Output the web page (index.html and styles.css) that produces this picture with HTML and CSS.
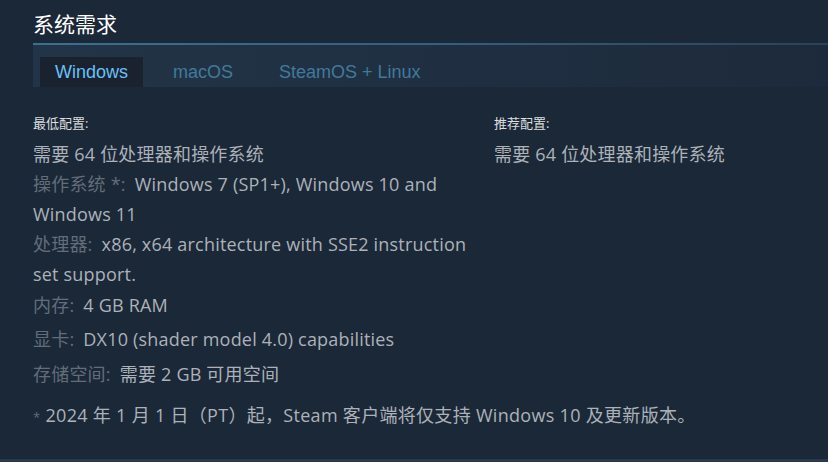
FILE: index.html
```html
<!DOCTYPE html>
<html lang="zh-CN">
<head>
<meta charset="utf-8">
<link rel="stylesheet" href="styles.css">
</head>
<body>
<div class="page">
  <h2 class="title">系统需求</h2>
  <div class="tabs">
    <div class="tab active">Windows</div>
    <div class="tab">macOS</div>
    <div class="tab">SteamOS + Linux</div>
  </div>
  <div class="reqs">
    <div class="col col-min">
      <div class="heading">最低配置:</div>
      <ul class="list">
        <li class="row">需要 64 位处理器和操作系统</li>
        <li class="row"><span class="label">操作系统 *:</span>Windows 7 (SP1+), Windows 10 and Windows 11</li>
        <li class="row"><span class="label">处理器:</span>x86, x64 architecture with SSE2 instruction set support.</li>
        <li class="row mem"><span class="label">内存:</span>4 GB RAM</li>
        <li class="row gpu"><span class="label">显卡:</span>DX10 (shader model 4.0) capabilities</li>
        <li class="row disk"><span class="label">存储空间:</span>需要 2 GB 可用空间</li>
      </ul>
    </div>
    <div class="col col-rec">
      <div class="heading">推荐配置:</div>
      <ul class="list">
        <li class="row">需要 64 位处理器和操作系统</li>
      </ul>
    </div>
  </div>
  <div class="note"><span class="star">*</span> 2024 年 1 月 1 日（PT）起，Steam 客户端将仅支持 Windows 10 及更新版本。</div>
</div>
<div class="bottom"></div>
</body>
</html>
```
FILE: styles.css
```css
html, body {
  margin: 0;
  padding: 0;
  background: #1b2838;
  overflow: hidden;
}
body {
  font-family: "Open Sans", "Noto Sans CJK SC", sans-serif;
  display: flex;
  flex-direction: column;
  width: 828px;
  height: 462px;
}
.page {
  flex: 1;
  padding-left: 33px;
}
.title {
  margin: 0;
  padding-top: 14px;
  height: 43px;
  box-sizing: border-box;
  font-family: "Liberation Sans", "Noto Sans CJK SC", sans-serif;
  font-size: 21px;
  font-weight: normal;
  color: #ffffff;
  line-height: 22px;
}
.tabs {
  border-top: 2px solid #3d6c8d;
  border-image: linear-gradient(90deg, #3e6f90 0%, #35607f 50%, #2a4259 100%) 1;
  height: 44px;
  box-sizing: border-box;
  background: linear-gradient(90deg, #223447 0%, #1f2f41 55%, #1d2a3b 100%);
  display: flex;
  align-items: flex-end;
  padding-left: 7px;
}
.tab {
  height: 30px;
  line-height: 30px;
  font-family: "Liberation Sans", sans-serif;
  font-size: 18px;
  color: #417a9b;
  padding: 0 15px;
  margin-right: 16px;
}
.tab.active {
  background: #1a2230;
  color: #67c1f5;
  margin-right: 15px;
}
.reqs {
  display: flex;
  padding-top: 28px;
}
.col-min {
  flex: 0 0 436px;
  margin-right: 25px;
}
.col-rec {
  flex: 1 1 auto;
}
.heading {
  font-size: 13px;
  color: #dcdedf;
  line-height: 17px;
  margin-bottom: 7px;
}
.list {
  list-style: none;
  margin: 0;
  padding: 0;
}
.row {
  font-size: 18px;
  line-height: 30px;
  color: #acb2b8;
  letter-spacing: 0.2px;
}
.row.mem { margin-top: 1px; }
.row.gpu { margin-top: 4px; }
.row.disk { margin-top: 5px; }
.label {
  color: #626d7a;
  padding-right: 9px;
}
.note {
  margin-top: 14px;
  font-size: 18px;
  color: #acb2b8;
  line-height: 24px;
  letter-spacing: 0.3px;
  white-space: nowrap;
}
.star {
  color: #626d7a;
  font-size: 13px;
}
.bottom {
  height: 3px;
  background: #2a3a4c;
}
```
